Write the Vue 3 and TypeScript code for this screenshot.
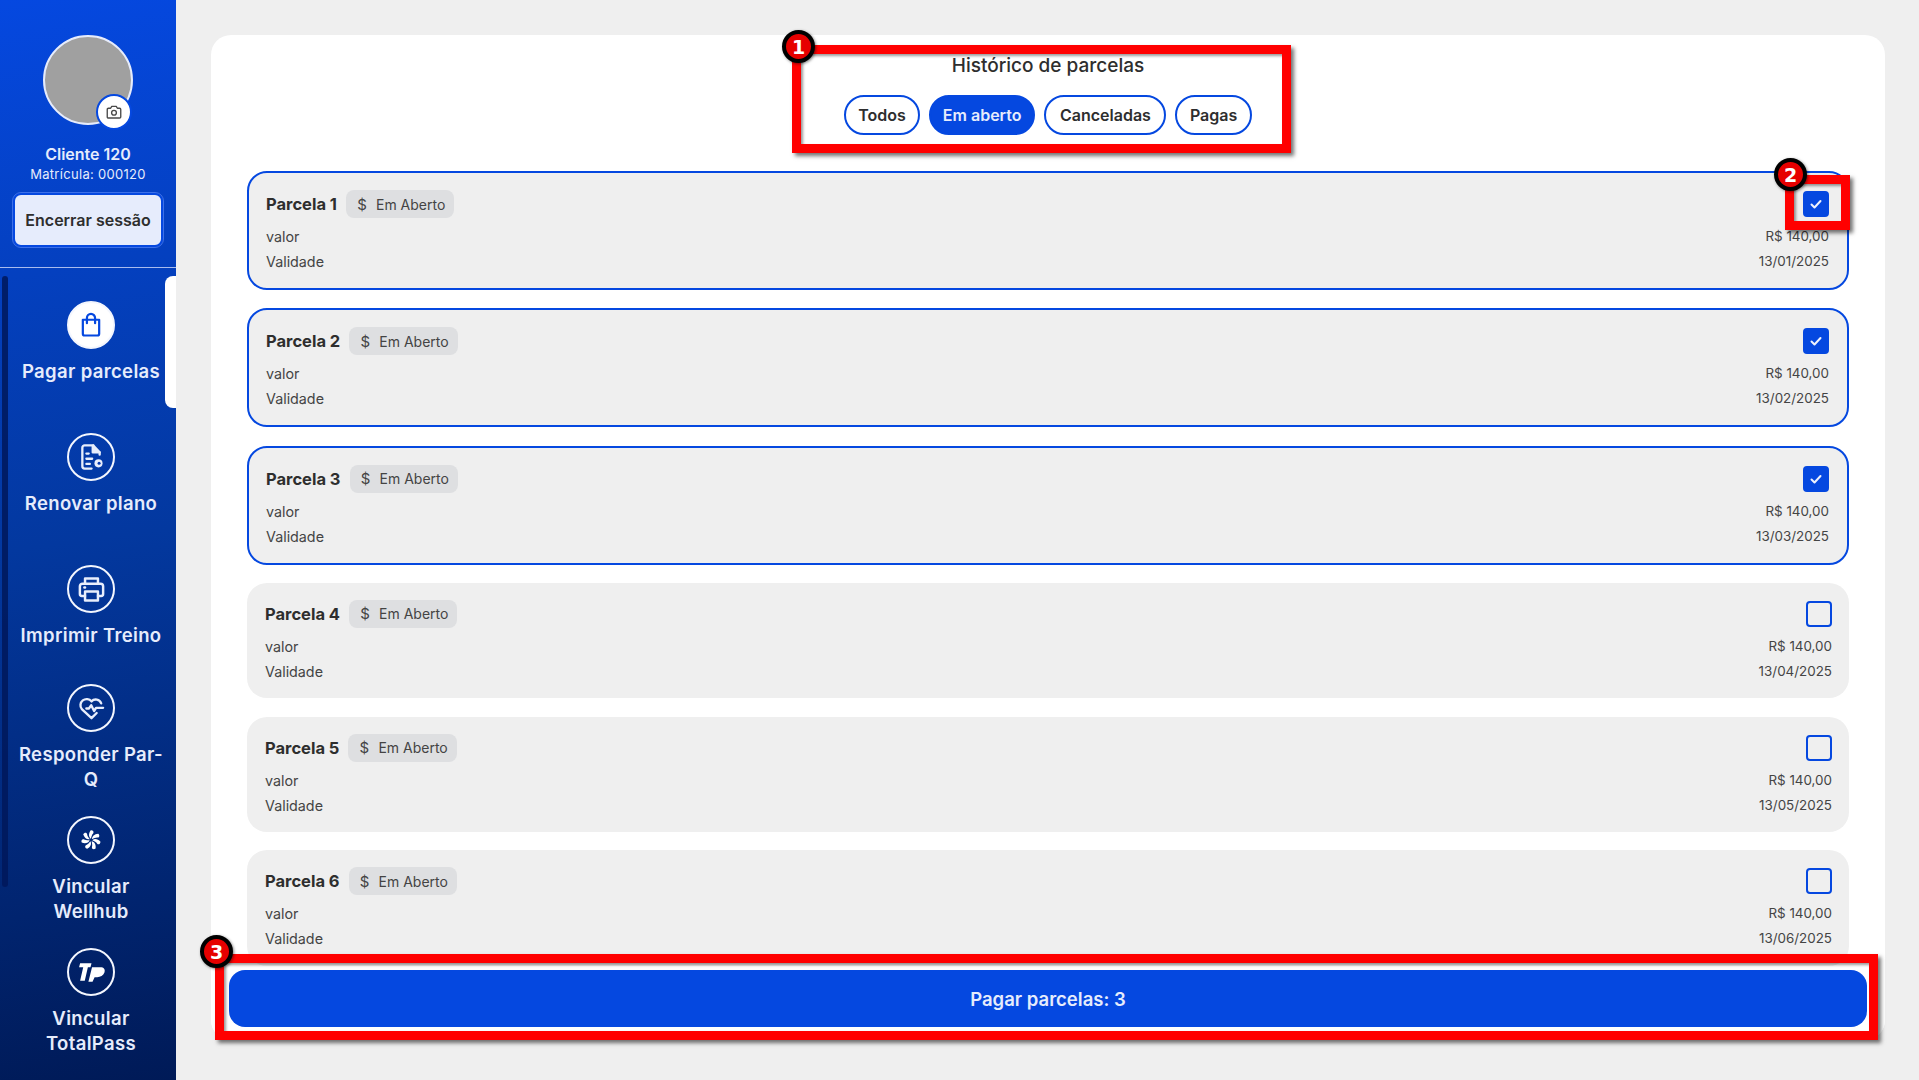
<script setup lang="ts">
interface Nav { label: string; icon: string; active?: boolean; short?: boolean }
const nav: Nav[] = [
  { label: 'Pagar parcelas', icon: 'bag', active: true },
  { label: 'Renovar plano', icon: 'doc' },
  { label: 'Imprimir Treino', icon: 'print', short: true },
  { label: 'Responder Par-Q', icon: 'heart' },
  { label: 'Vincular Wellhub', icon: 'well' },
  { label: 'Vincular TotalPass', icon: 'tp' },
]
const tabs = ['Todos', 'Em aberto', 'Canceladas', 'Pagas']
const rows = [
  { n: 1, date: '13/01/2025', sel: true },
  { n: 2, date: '13/02/2025', sel: true },
  { n: 3, date: '13/03/2025', sel: true },
  { n: 4, date: '13/04/2025', sel: false },
  { n: 5, date: '13/05/2025', sel: false },
  { n: 6, date: '13/06/2025', sel: false },
]
const blades = [0, 51.4, 102.8, 154.3, 205.7, 257.1, 308.6]
</script>

<template>
  <div class="page">
    <aside class="side">
      <div class="profile">
        <div class="avatar">
          <span class="cam">
            <svg width="18" height="18" viewBox="0 0 24 24" fill="none" stroke="#4a4a4a" stroke-width="1.8" stroke-linejoin="round"><path d="M3 8.500A1.500 1.500 0 0 1 4.500 7H7.500L9 4.500h6L16.500 7h3A1.500 1.500 0 0 1 21 8.500v10a1.500 1.500 0 0 1-1.500 1.500h-15A1.500 1.500 0 0 1 3 18.500z"/><circle cx="12" cy="13" r="3.200"/></svg>
          </span>
        </div>
        <div class="cname">Cliente 120</div>
        <div class="cid">Matrícula: 000120</div>
        <button class="logout">Encerrar sessão</button>
      </div>
      <div class="navwrap">
        <div class="thumb"></div>
        <div v-for="item in nav" :key="item.label" class="nav" :class="{ short: item.short }">
          <div v-if="item.active" class="tab"></div>
          <div class="ico" :class="{ on: item.active }">
            <svg v-if="item.icon === 'bag'" width="28" height="28" viewBox="0 0 24 24" fill="none" stroke="#0548e0" stroke-width="1.900" stroke-linejoin="round" stroke-linecap="round"><path d="M5 7.500h14v12a1.500 1.500 0 0 1-1.500 1.500h-11A1.500 1.500 0 0 1 5 19.500z"/><path d="M8.500 10.500V6a3.500 3.500 0 0 1 7 0v4.500"/></svg>
            <svg v-else-if="item.icon === 'doc'" width="30" height="30" viewBox="0 0 26 26" fill="none" stroke="#e8eefc" stroke-width="2" stroke-linejoin="round" stroke-linecap="round"><path d="M15 3H7.500a2 2 0 0 0-2 2v16a2 2 0 0 0 2 2h6"/><path d="M15 3l5.500 6v2"/><path d="M14.500 3.500v5.500h6" fill="#e8eefc"/><path d="M9 10h2M9 14.500h5M9 19h3"/><circle cx="19.500" cy="18.500" r="3.500" fill="#e8eefc" stroke="none"/><circle cx="20" cy="18.500" r="1.300" fill="#0336b0" stroke="none"/></svg>
            <svg v-else-if="item.icon === 'print'" width="31" height="31" viewBox="0 0 24 24" fill="none" stroke="#e8eefc" stroke-width="1.900" stroke-linejoin="round" stroke-linecap="round"><path d="M7 7.500V3.500h10v4"/><path d="M7 17H4.500A1.500 1.500 0 0 1 3 15.500v-6A2 2 0 0 1 5 7.500h14a2 2 0 0 1 2 2v6a1.500 1.500 0 0 1-1.500 1.500H17"/><path d="M7 13.500h10v7H7z"/><path d="M6.500 10.500h.5"/></svg>
            <svg v-else-if="item.icon === 'heart'" width="31" height="31" viewBox="0 0 24 24" fill="none" stroke="#e8eefc" stroke-width="1.800" stroke-linejoin="round" stroke-linecap="round"><path d="M19.500 8A4.500 4.500 0 0 0 12 6.500 4.500 4.500 0 0 0 4.500 12.500l7.500 7 4-4"/><path d="M8 12h2l1.800-2.500 2.200 4.500 1.500-2.500H21"/></svg>
            <svg v-else-if="item.icon === 'well'" width="22" height="22" viewBox="0 0 24 24" fill="#fff"><path v-for="a in blades" :key="a" :transform="`rotate(${a} 12 12)`" d="M12 10.500C9.500 9 9 5 11.500 1.500 14 1 15.500 3 14.500 4.500 13 6 12.500 8 12 10.500z"/></svg>
            <svg v-else width="29" height="21" viewBox="0 0 28 20" fill="#fff"><path d="M3 1h11l-1 4H10.500L7.500 18H3L6 5H2z"/><path d="M14.500 5h8c3.500 0 5 2 4 5s-4 4.500-7 4.500h-2.500L15 19h-4z"/></svg>
          </div>
          <div class="lbl">{{ item.label }}</div>
        </div>
      </div>
    </aside>

    <main class="main">
      <section class="panel">
        <h1 class="title">Histórico de parcelas</h1>
        <div class="tabs">
          <button v-for="t in tabs" :key="t" class="pill" :class="{ act: t === 'Em aberto' }">{{ t }}</button>
        </div>
        <div class="list">
          <article v-for="r in rows" :key="r.n" class="row" :class="{ sel: r.sel }">
            <div class="head">
              <strong class="pname">Parcela {{ r.n }}</strong>
              <span class="chip"><span class="dollar">$</span>Em Aberto</span>
              <span class="box" :class="{ checked: r.sel }">
                <svg v-if="r.sel" width="14" height="14" viewBox="0 0 14 14" fill="none" stroke="#eef2fd" stroke-width="2" stroke-linecap="round" stroke-linejoin="round"><path d="M2.500 7.500l3 3 6-6.500"/></svg>
              </span>
            </div>
            <div class="line"><span>valor</span><span class="val">R$ 140,00</span></div>
            <div class="line"><span>Validade</span><span class="val">{{ r.date }}</span></div>
          </article>
        </div>
        <div class="foot"><button class="pay">Pagar parcelas: 3</button></div>
      </section>
    </main>

    <div class="mark m1"></div>
    <div class="mark m2"></div>
    <div class="mark m3"></div>
    <div class="num n1">1</div>
    <div class="num n2">2</div>
    <div class="num n3">3</div>
  </div>
</template>

<style>
html, body { margin: 0; background: #efefef; overflow: hidden; }
</style>

<style scoped>
.page { position: relative; display: flex; width: 1919px; height: 1080px; overflow: hidden; background: #efefef; font-family: Inter, "Liberation Sans", sans-serif; color: #2e2e2e; }
.side { width: 176px; flex: none; display: flex; flex-direction: column; background: linear-gradient(172deg, #0548e0 0%, #03389f 50%, #001a57 100%); color: #e6ecfc; }
.profile { height: 268px; box-sizing: border-box; border-bottom: 1px solid #a9bcee; display: flex; flex-direction: column; align-items: center; padding-top: 35px; }
.avatar { position: relative; width: 90px; height: 90px; box-sizing: border-box; border-radius: 50%; background: #a0a0a0; border: 2px solid #e6ecfc; flex: none; }
.cam { position: absolute; right: -1px; bottom: -7px; width: 36px; height: 36px; box-sizing: border-box; border-radius: 50%; background: #fff; border: 2px solid #0548e0; display: flex; align-items: center; justify-content: center; }
.cname { margin-top: 19px; font-size: 16px; font-weight: 600; line-height: 20px; }
.cid { font-size: 13px; letter-spacing: .3px; line-height: 16px; margin-top: 2px; }
.logout { margin-top: 11px; width: 150px; height: 54px; border-radius: 8px; background: #e6ecfc; border: 2px solid #0548e0; outline: 1px solid #3d70e8; color: #2e2e2e; font: 600 16px Inter, "Liberation Sans", sans-serif; padding: 0; flex: none; }
.navwrap { position: relative; padding-top: 8px; }
.thumb { position: absolute; left: 2px; top: 8px; width: 6px; height: 611px; border-radius: 3px; background: #00185a; opacity: .85; }
.nav { position: relative; height: 132px; box-sizing: border-box; padding-top: 25px; display: flex; flex-direction: column; align-items: center; margin-left: 6px; }
.nav.short { height: 119px; }
.tab { position: absolute; right: 0; top: 0; width: 11px; height: 132px; background: #fff; border-radius: 8px 0 0 8px; }
.ico { width: 48px; height: 48px; box-sizing: border-box; border-radius: 50%; border: 2px solid #f3f6fe; display: flex; align-items: center; justify-content: center; flex: none; }
.ico.on { background: #fff; }
.lbl { margin-top: 9.500px; width: 150px; font-size: 18.500px; letter-spacing: .35px; font-weight: 600; line-height: 25px; text-align: center; position: relative; }
.main { flex: 1; min-width: 0; padding: 35px 34px 0 35px; }
.panel { position: relative; height: 1005px; background: #fff; border-radius: 20px; display: flex; flex-direction: column; align-items: center; overflow: hidden; }
.title { margin: 18px 0 0; font-size: 19px; font-weight: 500; line-height: 26px; color: #2e2e2e; }
.tabs { display: flex; gap: 9px; margin-top: 16px; }
.pill { height: 40px; border-radius: 20px; border: 2px solid #0548e0; background: #fff; padding: 0 12px; font: 600 16px Inter, "Liberation Sans", sans-serif; color: #2e2e2e; }
.pill:nth-child(3) { padding: 0 13.500px; }
.pill:nth-child(4) { padding: 0 12.500px; }
.pill.act { background: #0548e0; color: #e6ecfc; }
.list { align-self: stretch; margin: 36px 36px 0; display: flex; flex-direction: column; gap: 18.300px; }
.row { background: #efefef; border-radius: 20px; padding: 18px 17px 0 18px; height: 115.400px; box-sizing: border-box; font-size: 14.300px; color: #444; flex: none; }
.row.sel { height: 119px; border: 2px solid #0548e0; padding: 18px 18px 0 17px; }
.head { display: flex; align-items: center; height: 26px; }
.pname { font-size: 16.500px; font-weight: 700; color: #2e2e2e; }
.chip { margin-left: 9px; height: 28px; padding: 0 9px; border-radius: 8px; background: #dedfe1; display: flex; align-items: center; font-size: 14px; }
.dollar { width: 14px; margin-right: 7px; text-align: center; font-size: 15px; }
.box { margin-left: auto; width: 26px; height: 26px; box-sizing: border-box; border: 2px solid #0548e0; border-radius: 4px; display: flex; align-items: center; justify-content: center; }
.box.checked { background: #0548e0; }
.line { display: flex; justify-content: space-between; line-height: 25px; }
.head + .line { margin-top: 7px; }
.val { font-size: 13.400px; }
.foot { position: absolute; left: 0; right: 0; bottom: 0; height: 70px; background: #fff; padding: 0 18px; box-sizing: border-box; }
.pay { display: block; width: 100%; height: 57px; border: 0; border-radius: 16px; background: #0548e0; color: #e6ecfc; font: 600 18.500px Inter, "Liberation Sans", sans-serif; }
.mark { position: absolute; box-sizing: border-box; border: 9px solid #f00; box-shadow: 3px 3px 4px rgba(0,0,0,.55), inset 2px 2px 3px rgba(0,0,0,.4); }
.m1 { left: 792px; top: 45px; width: 499px; height: 108px; }
.m2 { left: 1785px; top: 175px; width: 65px; height: 55px; }
.m3 { left: 215px; top: 954px; width: 1663px; height: 86px; }
.num { position: absolute; width: 33px; height: 33px; box-sizing: border-box; border-radius: 50%; background: #e60000; border: 4px solid #000; color: #fff; font: 700 19px "DejaVu Sans", sans-serif; display: flex; align-items: center; justify-content: center; box-shadow: 1px 1px 3px rgba(0,0,0,.5); }
.n1 { left: 782px; top: 30px; }
.n2 { left: 1774px; top: 158px; }
.n3 { left: 200px; top: 935px; }
</style>
